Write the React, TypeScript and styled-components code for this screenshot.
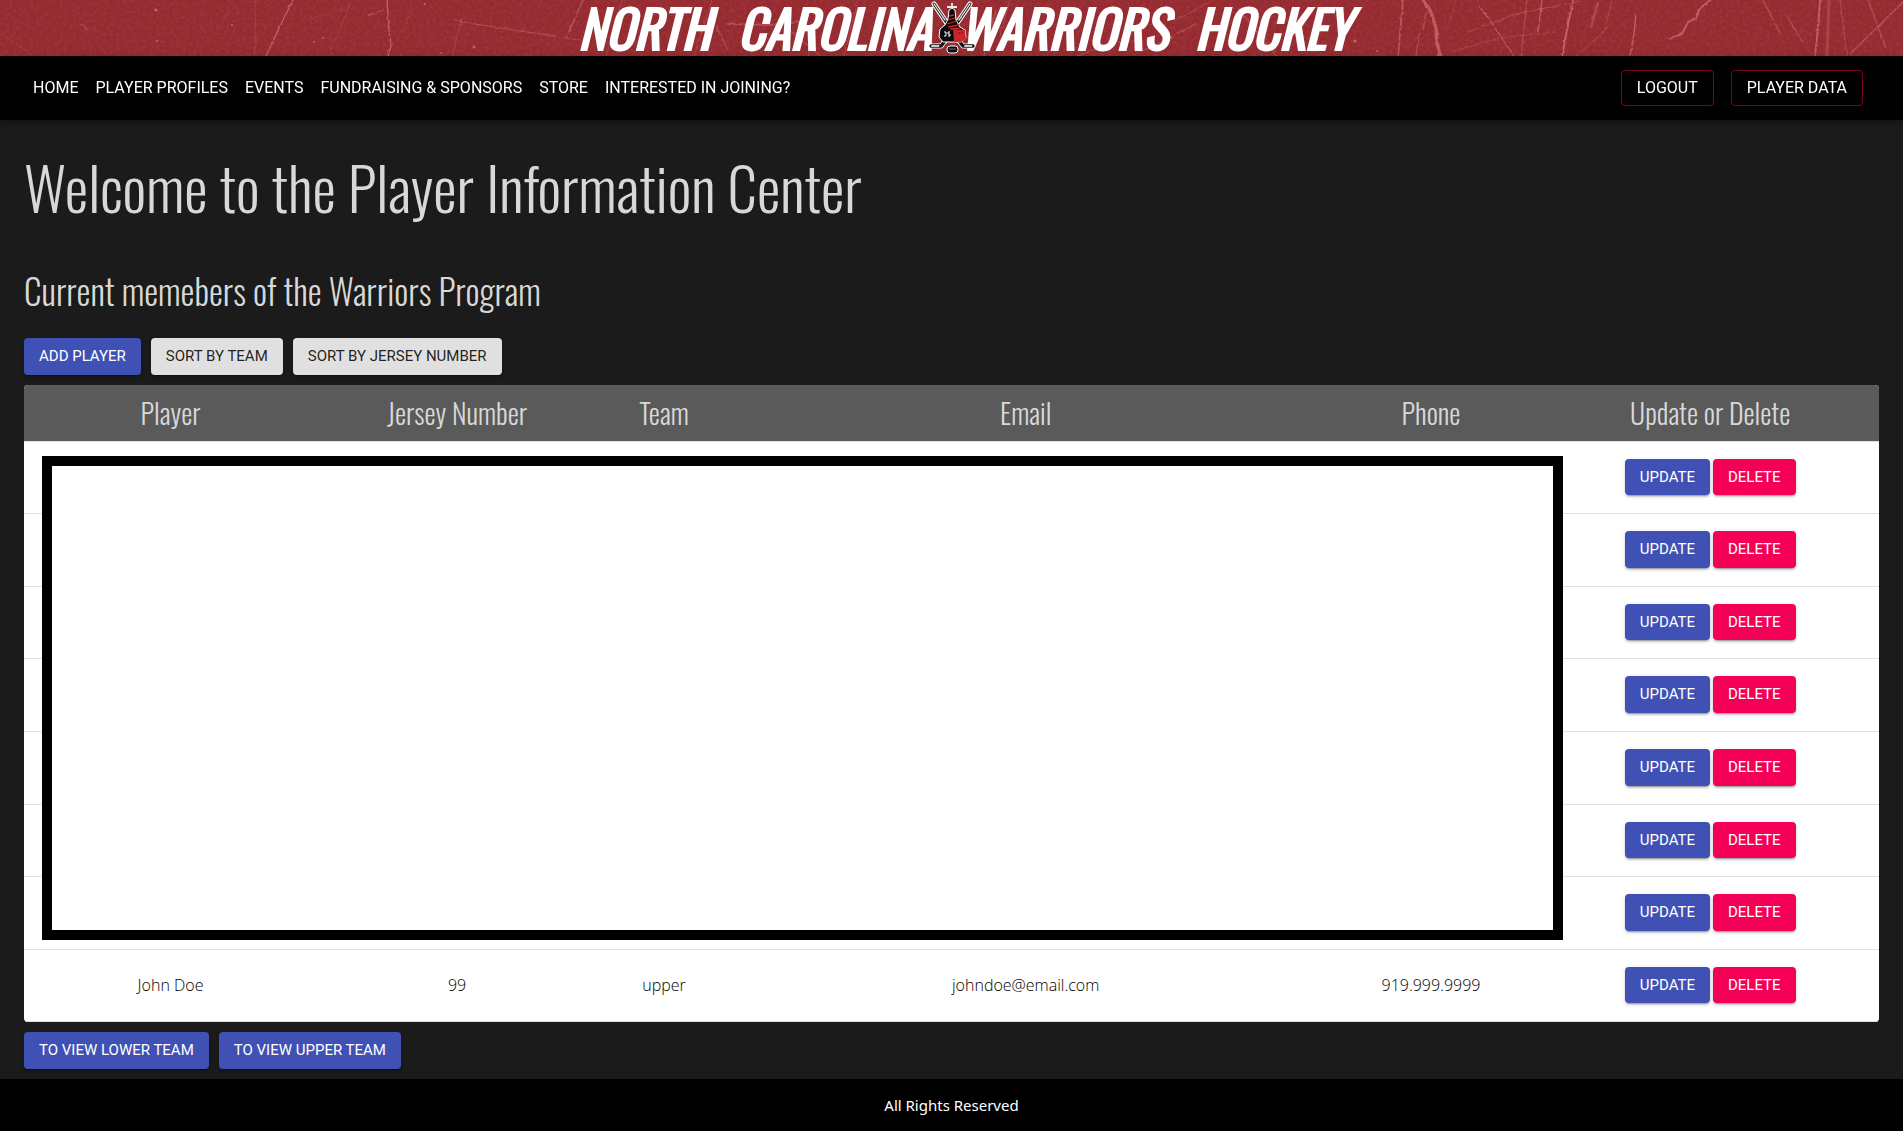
import React from "react";
import styled, { createGlobalStyle, css } from "styled-components";

const displayFont = `Oswald, "Roboto Condensed", sans-serif`;
const uiFont = `Roboto, "Liberation Sans", sans-serif`;
const textFont = `"Open Sans", "Noto Sans", sans-serif`;

const GlobalStyle = createGlobalStyle`
  *, *::before, *::after { box-sizing: border-box; }
  body {
    margin: 0;
    background: #1b1b1b;
    color: #fff;
    font-family: ${textFont};
    font-size: 16px;
  }
`;

const Banner = styled.header`
  position: relative;
  display: grid;
  grid-template-columns: 1fr 16px 1fr;
  align-items: center;
  height: 56px;
  background: #952a30;
`;

const Texture = styled.svg`
  position: absolute;
  inset: 0;
  width: 100%;
  height: 100%;
`;

const BannerWords = styled.span<{ $side: "left" | "right" }>`
  position: relative;
  display: flex;
  gap: 27px;
  justify-content: ${(p) => (p.$side === "left" ? "flex-end" : "flex-start")};
  padding-right: ${(p) => (p.$side === "left" ? "12px" : "0")};
  padding-bottom: 2px;
  font-family: ${displayFont};
  font-size: 52px;
  font-style: italic;
  font-weight: 400;
  line-height: 52px;
  white-space: nowrap;
  -webkit-text-stroke: 2px #fff;
`;

const LogoSlot = styled.span`
  position: relative;
  display: flex;
  justify-content: center;
  z-index: 1;
`;

const LogoSvg = styled.svg`
  flex: none;
  width: 48px;
  height: 56px;
`;

const NavBar = styled.nav`
  position: relative;
  display: flex;
  justify-content: space-between;
  align-items: center;
  min-height: 64px;
  padding: 0 40px 0 33px;
  background: #000;
  font-family: ${uiFont};
  box-shadow: 0 2px 4px -1px rgba(0, 0, 0, 0.2), 0 4px 5px rgba(0, 0, 0, 0.14),
    0 1px 10px rgba(0, 0, 0, 0.12);
`;

const NavGroup = styled.div`
  display: flex;
  align-items: center;
  gap: 17px;
`;

const NavLink = styled.a`
  color: #fff;
  font-size: 16px;
  line-height: 24px;
  text-decoration: none;
  text-transform: uppercase;
`;

const OutlineLink = styled(NavLink)`
  padding: 5px 15px;
  border: 1px solid rgba(245, 0, 87, 0.5);
  border-radius: 4px;
`;

const Main = styled.main`
  display: flex;
  flex-direction: column;
  padding: 31px 24px 10px;
`;

const Title = styled.h1`
  margin: 0;
  color: #d8d8d8;
  font-family: ${displayFont};
  font-size: 59px;
  font-weight: 300;
  line-height: 72px;
`;

const Subtitle = styled.h2`
  margin: 46px 0 27px;
  color: #d8d8d8;
  font-family: ${displayFont};
  font-size: 35px;
  font-weight: 300;
  line-height: 42px;
`;

const Actions = styled.div`
  display: flex;
  gap: 10px;
`;

const tones = {
  primary: css`
    background: #3f51b5;
    color: #fff;
  `,
  secondary: css`
    background: #f50057;
    color: #fff;
  `,
  neutral: css`
    background: #e0e0e0;
    color: rgba(0, 0, 0, 0.87);
  `,
};

const Button = styled.button<{ $tone: keyof typeof tones }>`
  padding: 6px 15px;
  border: 0;
  border-radius: 4px;
  font-family: ${uiFont};
  font-size: 15px;
  font-weight: 400;
  line-height: 1.64;
  text-transform: uppercase;
  white-space: nowrap;
  cursor: pointer;
  box-shadow: 0 3px 1px -2px rgba(0, 0, 0, 0.2), 0 2px 2px rgba(0, 0, 0, 0.14),
    0 1px 5px rgba(0, 0, 0, 0.12);
  ${(p) => tones[p.$tone]}
`;

const TablePanel = styled.div`
  position: relative;
  margin: 10px 0;
  overflow: hidden;
  border-radius: 4px;
  background: #fff;
`;

const Table = styled.table`
  width: 100%;
  table-layout: fixed;
  border-collapse: separate;
  border-spacing: 0;
`;

const Col = styled.col<{ $share: number }>`
  width: ${(p) => p.$share}%;
`;

const HeadCell = styled.th`
  padding: 10px 0;
  border-bottom: 1px solid #e0e0e0;
  background: #5a5a5a;
  color: #d8d8d8;
  font-family: ${displayFont};
  font-size: 28px;
  font-weight: 300;
  line-height: 36px;
`;

const Cell = styled.td`
  padding: 17px 0 18px;
  border-bottom: 1px solid #e0e0e0;
  color: #000;
  font-size: 16px;
  font-weight: 300;
  line-height: 24px;
  text-align: center;
`;

const RowActions = styled.div`
  display: flex;
  justify-content: center;
  gap: 3px;
`;

const RedactedBlock = styled.div`
  position: absolute;
  top: 71px;
  right: 316px;
  bottom: 82px;
  left: 18px;
  border: 10px solid #000;
  background: #fff;
`;

const Footer = styled.footer`
  padding: 14px 24px;
  background: #000;
  font-family: "Noto Sans", "Open Sans", sans-serif;
  font-size: 15px;
  line-height: 24px;
  text-align: center;
`;

const scratches: [string, number, number][] = [
  ["M293 0L279 28L266 56", 1.4, 0.55],
  ["M387 0L389 30L391 46L388 56", 1.3, 0.55],
  ["M255 0L256 40L254 56", 1, 0.2],
  ["M350 4L340 30L330 50", 1, 0.2],
  ["M300 22L330 14L350 6", 1, 0.15],
  ["M452 19L475 24L520 31L556 36", 1, 0.4],
  ["M462 18L452 56", 1, 0.25],
  ["M415 5L400 34", 1, 0.18],
  ["M368 15L384 10", 1, 0.4],
  ["M235 4L208 44", 1, 0.12],
  ["M4 36L32 54", 1, 0.2],
  ["M80 24L88 30", 1.5, 0.3],
  ["M583 0L566 38", 1.2, 0.45],
  ["M562 38L590 41", 1, 0.25],
  ["M622 0L606 56", 1, 0.25],
  ["M727 24L770 25L800 22", 1.8, 0.35],
  ["M716 26L728 50", 1.2, 0.35],
  ["M694 56L712 0", 1, 0.3],
  ["M790 30L820 56", 1.5, 0.3],
  ["M808 56L815 20", 1, 0.3],
  ["M858 0L844 56", 1, 0.3],
  ["M996 10L984 56", 1.5, 0.35],
  ["M1010 0L1000 36", 1, 0.3],
  ["M1078 56L1112 42L1150 40", 1.2, 0.35],
  ["M1140 52L1196 24", 1.2, 0.35],
  ["M1176 20L1210 2", 1, 0.3],
  ["M1238 8L1276 56", 1.2, 0.4],
  ["M1258 28L1276 52", 1, 0.35],
  ["M1403 0L1400 34L1398 56", 1.8, 0.45],
  ["M1423 0L1431 12L1436 28L1437 42L1440 56", 3.5, 0.5],
  ["M1426 12L1423 30", 2, 0.3],
  ["M1420 30L1416 56", 1, 0.4],
  ["M1456 0L1446 32", 1, 0.2],
  ["M1479 6L1495 28L1514 56", 1.2, 0.5],
  ["M1527 0L1521 56", 1.2, 0.35],
  ["M1542 0L1538 32", 1.2, 0.5],
  ["M1573 0L1567 30L1562 56", 1.8, 0.6],
  ["M1468 32L1516 14L1580 1", 1, 0.35],
  ["M1450 52L1500 38L1555 32", 1, 0.25],
  ["M1598 2L1591 28", 2.5, 0.3],
  ["M1612 0L1604 32L1576 56", 1, 0.3],
  ["M1636 14L1634 34L1630 56", 1.5, 0.5],
  ["M1711 0L1700 8L1696 18L1688 22L1682 34L1669 39", 2.2, 0.5],
  ["M1763 0L1781 35", 1.3, 0.4],
  ["M1786 14L1802 41", 1.3, 0.35],
  ["M1820 0L1818 28L1815 56", 1.8, 0.55],
  ["M1829 0L1827 56", 3, 0.25],
  ["M1840 0L1847 56", 1, 0.3],
  ["M1868 0L1886 48", 1.2, 0.35],
  ["M1903 2L1850 54", 1.3, 0.4],
];

function BannerTexture() {
  return (
    <Texture viewBox="0 0 1903 56" preserveAspectRatio="xMidYMid slice" aria-hidden="true">
      <defs>
        <filter id="grain" x="0" y="0" width="100%" height="100%">
          <feTurbulence type="fractalNoise" baseFrequency="0.3" numOctaves="3" seed="4" />
          <feColorMatrix values="0 0 0 0 0.85  0 0 0 0 0.45  0 0 0 0 0.47  1.2 0 0 0 -0.45" />
        </filter>
        <filter id="rough" x="0" y="0" width="1903" height="56" filterUnits="userSpaceOnUse">
          <feTurbulence type="fractalNoise" baseFrequency="0.2" numOctaves="2" seed="9" result="n" />
          <feDisplacementMap in="SourceGraphic" in2="n" scale="3" xChannelSelector="R" yChannelSelector="G" />
        </filter>
      </defs>
      <rect width="1903" height="56" filter="url(#grain)" opacity="0.16" />
      <g fill="none" stroke="#e58a8c" filter="url(#rough)">
        {scratches.map(([d, width, opacity]) => (
          <path key={d} d={d} strokeWidth={width} opacity={opacity} />
        ))}
      </g>
      <g fill="#e08a8c" opacity="0.6">
        <circle cx="156" cy="10" r="1.6" />
        <circle cx="157" cy="41" r="1" />
        <circle cx="232" cy="25" r="1" />
        <circle cx="323" cy="38" r="1" />
        <circle cx="314" cy="42" r="1" />
        <circle cx="425" cy="4" r="1" />
        <circle cx="474" cy="47" r="1.4" />
        <circle cx="441" cy="53" r="1" />
        <circle cx="1355" cy="41" r="1.6" />
        <circle cx="1377" cy="51" r="1" />
      </g>
    </Texture>
  );
}

function WarriorLogo() {
  return (
    <LogoSvg viewBox="0 0 48 56" role="img" aria-label="Warriors logo">
      <g strokeLinecap="round" strokeLinejoin="round" fill="none">
        <path d="M6 4L31 41M42 4L17 41" stroke="#fff" strokeWidth="5" />
        <path d="M6 4L31 41M42 4L17 41" stroke="#111" strokeWidth="3" />
        <path d="M6 4L17 20M42 4L31 20" stroke="#ddd" strokeWidth="1.4" strokeDasharray="2 1" />
        <path d="M17 41L13 46H3M31 41L35 46H45" stroke="#fff" strokeWidth="5" />
        <path d="M17 41L13 46H3M31 41L35 46H45" stroke="#111" strokeWidth="3.4" />
        <path d="M4 46H11M37 46H44" stroke="#ccc" strokeWidth="2" strokeDasharray="1.5 1" />
      </g>
      <path
        d="M21 10L24 8L27 10L28 20L32 27L37 30L38 38L33 42H15L11 37L12 29L17 25L20 19Z"
        fill="#080808"
        stroke="#fff"
        strokeWidth="1"
      />
      <path d="M25 29L37 30L38 39L33 42H26Z" fill="#c9252c" />
      <path
        d="M21 16L26 15M20 20L27 18M19 24L29 21M20 27L31 25M22 29L32 28"
        stroke="#c9252c"
        strokeWidth="1.3"
      />
      <path d="M24 3V8M19 7H29" stroke="#eee" strokeWidth="1.8" />
      <path d="M16 32H18V36H16M22 32H20V34H22V36H20" stroke="#fff" strokeWidth="1" fill="none" />
      <path d="M31 32V34M34 32V34" stroke="#711" strokeWidth="1" />
      <rect x="19" y="46" width="11" height="7" rx="3" fill="#080808" stroke="#fff" />
      <path d="M21 49H28" stroke="#777" strokeWidth="1" />
    </LogoSvg>
  );
}

const columns = [
  { label: "Player", share: 15.8 },
  { label: "Jersey Number", share: 15.1 },
  { label: "Team", share: 7.2 },
  { label: "Email", share: 31.8 },
  { label: "Phone", share: 11.9 },
  { label: "Update or Delete", share: 18.2 },
];

const hiddenRow = ["", "", "", "", ""];
const players = [
  ...Array.from({ length: 7 }, () => hiddenRow),
  ["John Doe", "99", "upper", "johndoe@email.com", "919.999.9999"],
];

const links = [
  "Home",
  "Player Profiles",
  "Events",
  "Fundraising & Sponsors",
  "Store",
  "Interested in Joining?",
];

export default function App() {
  return (
    <>
      <GlobalStyle />
      <Banner>
        <BannerTexture />
        <BannerWords $side="left">
          <span>NORTH</span>
          <span>CAROLINA</span>
        </BannerWords>
        <LogoSlot>
          <WarriorLogo />
        </LogoSlot>
        <BannerWords $side="right">
          <span>WARRIORS</span>
          <span>HOCKEY</span>
        </BannerWords>
      </Banner>
      <NavBar>
        <NavGroup>
          {links.map((label) => (
            <NavLink key={label} href="#">
              {label}
            </NavLink>
          ))}
        </NavGroup>
        <NavGroup>
          <OutlineLink href="#">Logout</OutlineLink>
          <OutlineLink href="#">Player Data</OutlineLink>
        </NavGroup>
      </NavBar>
      <Main>
        <Title>Welcome to the Player Information Center</Title>
        <Subtitle>Current memebers of the Warriors Program</Subtitle>
        <Actions>
          <Button $tone="primary">Add Player</Button>
          <Button $tone="neutral">Sort by Team</Button>
          <Button $tone="neutral">Sort by Jersey Number</Button>
        </Actions>
        <TablePanel>
          <Table>
            <colgroup>
              {columns.map((c) => (
                <Col key={c.label} $share={c.share} />
              ))}
            </colgroup>
            <thead>
              <tr>
                {columns.map((c) => (
                  <HeadCell key={c.label} scope="col">
                    {c.label}
                  </HeadCell>
                ))}
              </tr>
            </thead>
            <tbody>
              {players.map((fields, row) => (
                <tr key={row}>
                  {fields.map((value, i) => (
                    <Cell key={i}>{value}</Cell>
                  ))}
                  <Cell>
                    <RowActions>
                      <Button $tone="primary">Update</Button>
                      <Button $tone="secondary">Delete</Button>
                    </RowActions>
                  </Cell>
                </tr>
              ))}
            </tbody>
          </Table>
          <RedactedBlock />
        </TablePanel>
        <Actions>
          <Button $tone="primary">To View Lower Team</Button>
          <Button $tone="primary">To View Upper Team</Button>
        </Actions>
      </Main>
      <Footer>All Rights Reserved</Footer>
    </>
  );
}
